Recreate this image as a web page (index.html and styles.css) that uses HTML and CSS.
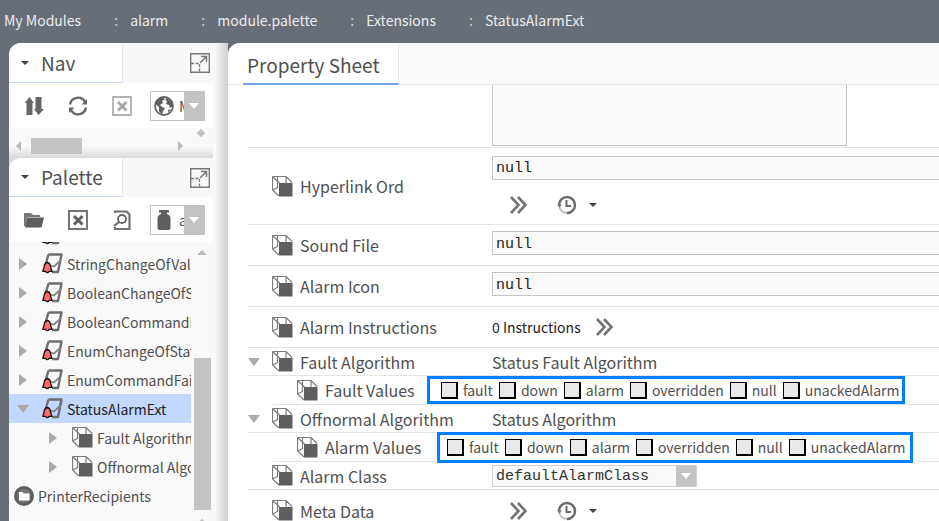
FILE: index.html
```html
<!DOCTYPE html>
<html lang="en">
<head>
<meta charset="utf-8">
<title>StatusAlarmExt</title>
<link rel="stylesheet" href="styles.css">
</head>
<body>
<svg class="sprite" aria-hidden="true">
  <symbol id="cube" viewBox="0 0 21 21">
    <path d="M.5 .5H14L20 6.500M.5 .5V14L7 20M.5 .5L7.500 7M14 .5V7M.5 14L5.500 11.500M5.500 1V12" fill="none" stroke="#7c7c7c" stroke-width="1.200"/>
    <path d="M7 7H20.500V20.500H7Z" fill="#5e5e5e"/>
  </symbol>
  <symbol id="ext" viewBox="0 0 21 21">
    <path d="M6.500 1.500H19.500L16 19H10M6.500 1.500L4 10" fill="none" stroke="#6e6e6e" stroke-width="2.400" stroke-linejoin="round"/>
    <path d="M8 12.500L12 13.500L18.500 7.500" fill="none" stroke="#858585" stroke-width="1.800"/>
    <path d="M5.300 9.500C2.300 10 2.300 12 2 14.500L.8 18.300H3.500Q5.300 21 7.100 18.300H9.900L8.700 14.500C8.400 12 8.300 10 5.300 9.500Z" fill="#ff6a6f" stroke="#111" stroke-width="1.300" stroke-linejoin="round"/>
  </symbol>
  <symbol id="chev" viewBox="0 0 18 18">
    <path d="M1 1L8.500 9L1 17M8 1L15.500 9L8 17" fill="none" stroke="#747474" stroke-width="2.600"/>
  </symbol>
  <symbol id="clock" viewBox="0 0 20 20">
    <circle cx="10" cy="10" r="8" fill="none" stroke="#c4c4c4" stroke-width="2.200"/>
    <path d="M10 18A8 8 0 1 0 2 10" fill="none" stroke="#6c6c6c" stroke-width="2.400"/>
    <path d="M0 9.500H5L2.500 12.500Z" fill="#777"/>
    <path d="M9.500 5V11H14" fill="none" stroke="#6c6c6c" stroke-width="2"/>
  </symbol>
  <symbol id="expand" viewBox="0 0 20 20">
    <path d="M.7 .7H19.300V19.300H.7Z" fill="none" stroke="#777" stroke-width="1.400"/>
    <path d="M1 10.500H9.500V19" fill="none" stroke="#777" stroke-width="1.300" stroke-dasharray="3 1.500"/>
    <path d="M10 10L16 4M11 3.500H16.500V9" fill="none" stroke="#777" stroke-width="1.500"/>
  </symbol>
</svg>

<header class="topbar">
  <nav class="crumbs">
    <a href="#">My Modules</a><span class="colon">:</span>
    <a href="#">alarm</a><span class="colon">:</span>
    <a href="#">module.palette</a><span class="colon">:</span>
    <a href="#">Extensions</a><span class="colon">:</span>
    <a href="#">StatusAlarmExt</a>
  </nav>
</header>

<div class="workspace">
  <aside class="sidebar">
    <section class="pane nav-pane">
      <div class="pane-head">
        <h2 class="pane-title"><i class="caret"></i>Nav</h2>
        <button class="icon-btn" aria-label="Expand"><svg width="20" height="20"><use href="#expand"/></svg></button>
      </div>
      <div class="tools">
        <button class="icon-btn" aria-label="Sort"><svg width="20" height="20" viewBox="0 0 20 20"><path d="M5.500 1L10 7H8.500V19H2.500V7H.5ZM14.500 19L20 13H17.500V1H11.500V13H10Z" fill="#666"/></svg></button>
        <button class="icon-btn" aria-label="Refresh"><svg width="20" height="20" viewBox="0 0 20 20"><path d="M2 8.500A8 8 0 0 1 17 6M18 11.500A8 8 0 0 1 3 14" fill="none" stroke="#666" stroke-width="2.400"/><path d="M19 3V8.500H13.500ZM1 17V11.500H6.500Z" fill="#666"/></svg></button>
        <button class="icon-btn" aria-label="Close" disabled><svg width="20" height="20" viewBox="0 0 20 20"><path d="M1 1H19V19H1Z" fill="none" stroke="#b0b0b0" stroke-width="1.800"/><path d="M6 6L14.500 14.500M14.500 6L6 14.500" stroke="#aaa" stroke-width="3"/></svg></button>
        <div class="picker">
          <svg width="20" height="20" viewBox="0 0 20 20"><circle cx="10" cy="10" r="9" fill="#fff" stroke="#666" stroke-width="1.800"/><path d="M3 4L8 1L11 3L8 5L9 7L6 9L8 11L11 12L9 15L8 19L5 15L5 11L1 8ZM13 2L18 6L19 10L16 12L15 9L12 8L13 5L11 4ZM14 14L17 13L14 17Z" fill="#5f5f5f"/></svg>
          <select aria-label="Nav root"><option>M</option></select>
          <span class="arrow"><i></i></span>
        </div>
      </div>
      <div class="hscroll"><i class="tri left"></i><span class="thumb"></span><i class="tri right"></i><i class="diamond"></i></div>
    </section>

    <section class="pane palette-pane">
      <div class="pane-head">
        <h2 class="pane-title"><i class="caret"></i>Palette</h2>
        <button class="icon-btn" aria-label="Expand"><svg width="20" height="20"><use href="#expand"/></svg></button>
      </div>
      <div class="tools">
        <button class="icon-btn" aria-label="Open"><svg width="20" height="20" viewBox="0 0 20 20"><path d="M0 16V3H7L9 5H16V7H3L1.500 16Z" fill="#777"/><path d="M3 7.500H20L17.500 17.500H1Z" fill="#5e5e5e"/></svg></button>
        <button class="icon-btn" aria-label="Close palette"><svg width="20" height="20" viewBox="0 0 20 20"><path d="M1 1H19V19H1Z" fill="none" stroke="#757575" stroke-width="2"/><path d="M6 6L14.500 14.500M14.500 6L6 14.500" stroke="#606060" stroke-width="3"/></svg></button>
        <button class="icon-btn" aria-label="Preview"><svg width="20" height="20" viewBox="0 0 20 20"><path d="M3 3V1.500H14.500L17.500 4.500V19H3V17" fill="none" stroke="#707070" stroke-width="2.200"/><circle cx="10" cy="9" r="4" fill="none" stroke="#666" stroke-width="1.800"/><path d="M7 12L2 16" stroke="#666" stroke-width="2"/></svg></button>
        <div class="picker">
          <svg width="20" height="20" viewBox="0 0 20 20"><path d="M5 0H15V2.500H13V4Q16.500 5.500 16.500 8V18Q16.500 20 14.500 20H5.500Q3.500 20 3.500 18V8Q3.500 5.500 7 4V2.500H5Z" fill="#5f5f5f"/></svg>
          <select aria-label="Palette"><option>a</option></select>
          <span class="arrow"><i></i></span>
        </div>
      </div>
      <div class="tree-area">
        <ul class="tree">
          <li><i class="tri right"></i><svg width="21" height="21"><use href="#ext"/></svg></li>
          <li><i class="tri right"></i><svg width="21" height="21"><use href="#ext"/></svg>StringChangeOfValue</li>
          <li><i class="tri right"></i><svg width="21" height="21"><use href="#ext"/></svg>BooleanChangeOfState</li>
          <li><i class="tri right"></i><svg width="21" height="21"><use href="#ext"/></svg>BooleanCommandFail</li>
          <li><i class="tri right"></i><svg width="21" height="21"><use href="#ext"/></svg>EnumChangeOfState</li>
          <li><i class="tri right"></i><svg width="21" height="21"><use href="#ext"/></svg>EnumCommandFail</li>
          <li class="selected"><i class="tri down"></i><svg width="21" height="21"><use href="#ext"/></svg>StatusAlarmExt</li>
          <li class="child"><i class="tri right"></i><svg width="21" height="21"><use href="#cube"/></svg>Fault Algorithm</li>
          <li class="child"><i class="tri right"></i><svg width="21" height="21"><use href="#cube"/></svg>Offnormal Algorithm</li>
          <li class="root"><svg width="20" height="20" viewBox="0 0 20 20"><circle cx="10" cy="10" r="8.500" fill="#777" stroke="#5e5e5e" stroke-width="3"/><path d="M5 6H8.500L9.500 7.500H15.500V14.500H5Z" fill="#fff"/></svg>PrinterRecipients</li>
        </ul>
        <div class="vscroll"><i class="tri up"></i><span class="thumb"></span><i class="diamond"></i></div>
      </div>
    </section>
  </aside>

  <main class="sheet">
    <div class="sheet-head"><h1>Property Sheet</h1></div>
    <div class="props">
      <div class="prop first"><span></span><textarea aria-label="Alarm text"></textarea></div>
      <div class="prop tall">
        <label class="name" for="ord"><svg width="21" height="21"><use href="#cube"/></svg>Hyperlink Ord</label>
        <div class="stack">
          <input id="ord" class="field" type="text" value="null">
          <div class="actions">
            <button class="icon-btn" aria-label="More"><svg width="18" height="18"><use href="#chev"/></svg></button>
            <button class="icon-btn" aria-label="History"><svg width="20" height="20"><use href="#clock"/></svg><i class="caret"></i></button>
          </div>
        </div>
      </div>
      <div class="prop mid">
        <label class="name" for="sound"><svg width="21" height="21"><use href="#cube"/></svg>Sound File</label>
        <input id="sound" class="field" type="text" value="null">
      </div>
      <div class="prop mid">
        <label class="name" for="icon"><svg width="21" height="21"><use href="#cube"/></svg>Alarm Icon</label>
        <input id="icon" class="field" type="text" value="null">
      </div>
      <div class="prop mid">
        <span class="name"><svg width="21" height="21"><use href="#cube"/></svg>Alarm Instructions</span>
        <div class="inline"><span>0 Instructions</span><button class="icon-btn" aria-label="Edit instructions"><svg width="18" height="18"><use href="#chev"/></svg></button></div>
      </div>
      <div class="prop short">
        <span class="name"><i class="tri down"></i><svg width="21" height="21"><use href="#cube"/></svg>Fault Algorithm</span>
        <span class="value">Status Fault Algorithm</span>
      </div>
      <div class="prop nested">
        <span class="name"><svg width="21" height="21"><use href="#cube"/></svg>Fault Values</span>
        <div class="flags" role="group" aria-label="Fault Values">
          <label><input type="checkbox">fault</label><label><input type="checkbox">down</label><label><input type="checkbox">alarm</label><label><input type="checkbox">overridden</label><label><input type="checkbox">null</label><label><input type="checkbox">unackedAlarm</label>
        </div>
      </div>
      <div class="prop short">
        <span class="name"><i class="tri down"></i><svg width="21" height="21"><use href="#cube"/></svg>Offnormal Algorithm</span>
        <span class="value">Status Algorithm</span>
      </div>
      <div class="prop nested wide">
        <span class="name"><svg width="21" height="21"><use href="#cube"/></svg>Alarm Values</span>
        <div class="flags" role="group" aria-label="Alarm Values">
          <label><input type="checkbox">fault</label><label><input type="checkbox">down</label><label><input type="checkbox">alarm</label><label><input type="checkbox">overridden</label><label><input type="checkbox">null</label><label><input type="checkbox">unackedAlarm</label>
        </div>
      </div>
      <div class="prop short">
        <label class="name" for="cls"><svg width="21" height="21"><use href="#cube"/></svg>Alarm Class</label>
        <div class="combo"><select id="cls"><option>defaultAlarmClass</option></select><span class="arrow"><i></i></span></div>
      </div>
      <div class="prop mid last">
        <span class="name"><svg width="21" height="21"><use href="#cube"/></svg>Meta Data</span>
        <div class="actions">
          <button class="icon-btn" aria-label="More"><svg width="18" height="18"><use href="#chev"/></svg></button>
          <button class="icon-btn" aria-label="History"><svg width="20" height="20"><use href="#clock"/></svg><i class="caret"></i></button>
        </div>
      </div>
    </div>
  </main>
</div>
</body>
</html>
```
FILE: styles.css
```css
* { box-sizing: border-box; }

body {
  margin: 0;
  height: 100vh;
  display: flex;
  flex-direction: column;
  overflow: hidden;
  background: #686e78;
  color: #505050;
  font: 14px/20px "Noto Sans CJK SC", "Noto Sans", sans-serif;
}

h1, h2 { margin: 0; font-size: 19px; line-height: 28px; font-weight: 400; }
svg { display: block; flex: none; }
.sprite { position: absolute; width: 0; height: 0; }

.icon-btn {
  display: flex;
  align-items: center;
  gap: 12px;
  padding: 0;
  border: 0;
  background: none;
}

/* Triangles */
.caret {
  flex: none;
  border: 4px solid transparent;
  border-top: 4px solid #444;
  border-bottom: 0;
}
.tri { flex: none; width: 0; height: 0; border: 6px solid transparent; }
.tri.right { border-left: 8px solid #aaa; border-right: 0; }
.tri.left { border-right: 6px solid #bbb; border-left: 0; }
.tri.down { border-top: 8px solid #aaa; border-bottom: 0; }
.tri.up { border: 5px solid transparent; border-bottom-color: #bbb; border-top: 0; }
.arrow {
  flex: none;
  width: 20px;
  display: flex;
  align-items: center;
  justify-content: center;
  background: #c3c3c3;
}
.arrow i { border: 5px solid transparent; border-top: 6px solid #fff; border-bottom: 0; }

/* Top bar */
.topbar { flex: none; height: 43px; padding: 10px 4px; }
.crumbs { display: flex; white-space: nowrap; }
.crumbs a { color: #ececec; text-decoration: none; }
.colon { width: 49px; padding-left: 33px; color: #c8c8c8; }

.workspace { flex: 1; min-height: 0; display: flex; padding-left: 9px; }

/* Sidebar */
.sidebar {
  flex: none;
  width: 219px;
  padding-right: 15px;
  display: flex;
  flex-direction: column;
  border-top-left-radius: 12px;
  background: linear-gradient(to right, #f9f9f9 206px, #cfcfcf 219px);
}
.pane { display: flex; flex-direction: column; border-top-left-radius: 12px; }
.nav-pane { height: 115px; }
.palette-pane { flex: 1; min-height: 0; background: #dadada; border-radius: 0; }
.pane-head {
  flex: none;
  height: 40px;
  display: flex;
  align-items: center;
  justify-content: space-between;
  padding-right: 3px;
  border-top-left-radius: 12px;
  background: #f8f8f8;
}
.palette-pane .pane-head { height: 39px; }
.pane-title {
  align-self: stretch;
  width: 114px;
  display: flex;
  align-items: center;
  gap: 12px;
  padding-left: 12px;
  border-right: 1px solid #e8e8e8;
  border-bottom: 1px solid #c6d9f6;
  border-top-left-radius: 12px;
  background: #fff;
}
.tools {
  flex: none;
  height: 45px;
  display: flex;
  align-items: center;
  gap: 24px;
  padding-left: 15px;
  background: #fff;
}
.picker {
  width: 55px;
  height: 30px;
  margin-left: -6px;
  display: flex;
  align-items: center;
  border: 1px solid #c3c3c3;
  padding-left: 3px;
  overflow: hidden;
}
.picker select {
  flex: 1;
  width: 0;
  padding: 0 0 0 5px;
  border: 0;
  appearance: none;
  background: none;
  color: #505050;
  font: inherit;
  overflow: hidden;
  text-overflow: clip;
}
.picker .arrow { align-self: stretch; }
.hscroll {
  flex: 1;
  display: flex;
  align-items: center;
  padding-left: 7px;
  background: linear-gradient(#f9f9f9 60%, #dadada);
}
.hscroll .thumb { width: 51px; height: 16px; margin: 6px 96px 0 10px; background: #c3c3c3; }
.hscroll .tri { margin-top: 6px; border-width: 5px; }
.hscroll .left { border-left: 0; }
.hscroll .right { border-right: 0; border-left-color: #bbb; }
.diamond { flex: none; width: 6px; height: 6px; background: #c0c0c0; transform: rotate(45deg); }
.hscroll .diamond { margin: 0 0 20px 15px; }

.tree-area { flex: 1; min-height: 0; display: flex; background: #f9f9f9; overflow: hidden; }
.tree { flex: 1; min-width: 0; margin: -22px 0 0; padding: 0; list-style: none; overflow: hidden; }
.tree li {
  height: 29px;
  display: flex;
  align-items: center;
  gap: 4px;
  padding-left: 10px;
  white-space: nowrap;
}
.tree .tri { margin-right: 11px; }
.tree .tri.down { margin: 0 9px 0 -2px; }
.tree .child { padding-left: 40px; }
.tree .root { padding-left: 5px; }
.tree .selected { background: #c2d8ff; color: #222; }
.vscroll {
  flex: none;
  width: 22px;
  display: flex;
  flex-direction: column;
  align-items: center;
  padding-top: 8px;
}
.vscroll .thumb { flex: none; width: 17px; height: 152px; margin: 103px 0 10px; background: #c3c3c3; }

/* Property sheet */
.sheet {
  flex: 1;
  min-width: 0;
  display: flex;
  flex-direction: column;
  border-top-left-radius: 12px;
  background: #fff;
  overflow: hidden;
}
.sheet-head {
  flex: none;
  height: 42px;
  padding-left: 15px;
  background: linear-gradient(to right, #fff 170px, #f9f9f9 170px);
  border-bottom: 1px solid #e8e8e8;
}
.sheet-head h1 {
  width: 156px;
  height: 42px;
  padding: 8px 4px;
  border-right: 1px solid #e8e8e8;
  border-bottom: 2px solid #73a3ea;
}
.props { flex: 1; min-height: 0; padding-left: 20px; overflow: hidden; font-size: 16px; }
.prop {
  display: grid;
  grid-template-columns: 244px 1fr;
  align-items: center;
  border-bottom: 1px solid #e4e4e4;
}
.first { height: 63px; align-items: start; }
.tall { height: 77px; }
.mid { height: 41px; }
.short { height: 28px; }
.nested { height: 29px; margin-left: 25px; grid-template-columns: 154px 1fr; }
.nested.wide { grid-template-columns: 164px 1fr; }
.last { border-bottom: 0; }
.name { display: flex; align-items: center; gap: 7px; padding-left: 24px; white-space: nowrap; }
.name .tri { margin: 0 -2px 0 -24px; }
.name .tri.down + svg { margin-left: 7px; }

.first textarea {
  width: 355px;
  height: 61px;
  border: 1px solid #c3c3c3;
  border-top: 0;
  background: #f9f9f9;
  resize: none;
}
.field {
  width: 100%;
  height: 24px;
  padding: 2px 3px 0;
  border: 1px solid #c3c3c3;
  border-right: 0;
  background: #f9f9f9;
  color: #222;
  font: 15px "Liberation Mono", monospace;
}
.mid .field { margin-bottom: 4px; }
.stack { display: grid; gap: 15px; margin-bottom: 2px; }
.actions { display: flex; align-items: center; gap: 29px; padding-left: 18px; }
.inline { display: flex; align-items: center; gap: 15px; font-size: 14px; color: #222; }

.flags {
  justify-self: start;
  height: 28px;
  display: flex;
  align-items: center;
  gap: 6px;
  padding: 0 3px 0 11px;
  border: 3px solid #0080ff;
  font-size: 14px;
  white-space: nowrap;
}
.wide .flags { height: 31px; margin: -2px 0; padding: 0 5px 0 7px; }
.flags label { display: flex; align-items: center; gap: 5px; }
.flags input {
  appearance: none;
  width: 17px;
  height: 17px;
  margin: 0;
  border: 1px solid #000;
  border-right-width: 2px;
  border-bottom-width: 2px;
  background: #e9e9e9;
}
.combo { width: 205px; height: 22px; display: flex; border: 1px solid #d0d0d0; background: #f9f9f9; }
.combo select {
  flex: 1;
  min-width: 0;
  padding: 2px 3px 0;
  border: 0;
  appearance: none;
  background: none;
  color: #333;
  font: 15px "Liberation Mono", monospace;
}
```
